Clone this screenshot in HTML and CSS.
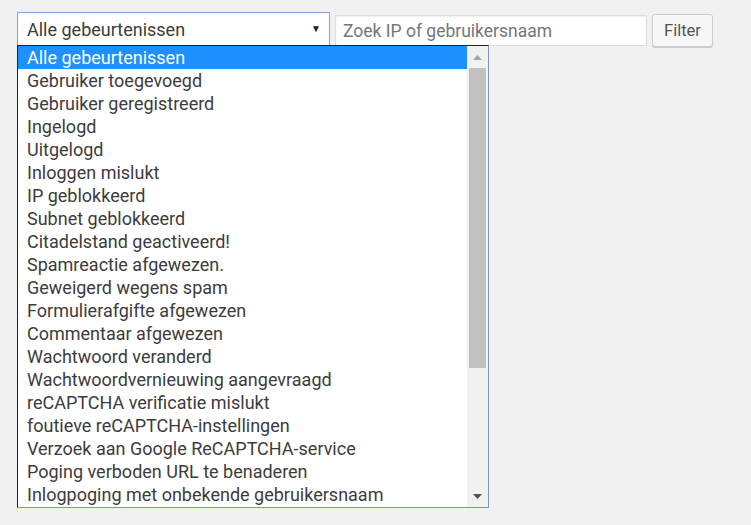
FILE: index.html
```html
<!DOCTYPE html>
<html lang="nl">
<head>
<meta charset="utf-8">
<title>Filter</title>
<link rel="stylesheet" href="styles.css">
</head>
<body>
<div class="page">
  <div class="toolbar">
    <div class="select">
      <span class="select-value">Alle gebeurtenissen</span>
      <span class="select-arrow">▼</span>
    </div>
    <input class="search" type="text" placeholder="Zoek IP of gebruikersnaam">
    <button class="btn" type="button">Filter</button>
  </div>
  <div class="dropdown">
    <ul class="options">
      <li class="option selected">Alle gebeurtenissen</li>
      <li class="option">Gebruiker toegevoegd</li>
      <li class="option">Gebruiker geregistreerd</li>
      <li class="option">Ingelogd</li>
      <li class="option">Uitgelogd</li>
      <li class="option">Inloggen mislukt</li>
      <li class="option">IP geblokkeerd</li>
      <li class="option">Subnet geblokkeerd</li>
      <li class="option">Citadelstand geactiveerd!</li>
      <li class="option">Spamreactie afgewezen.</li>
      <li class="option">Geweigerd wegens spam</li>
      <li class="option">Formulierafgifte afgewezen</li>
      <li class="option">Commentaar afgewezen</li>
      <li class="option">Wachtwoord veranderd</li>
      <li class="option">Wachtwoordvernieuwing aangevraagd</li>
      <li class="option">reCAPTCHA verificatie mislukt</li>
      <li class="option">foutieve reCAPTCHA-instellingen</li>
      <li class="option">Verzoek aan Google ReCAPTCHA-service</li>
      <li class="option">Poging verboden URL te benaderen</li>
      <li class="option">Inlogpoging met onbekende gebruikersnaam</li>
    </ul>
    <div class="scrollbar">
      <div class="sb-btn"><svg width="9" height="5" viewBox="0 0 9 5"><path d="M0 5 L4.5 0 L9 5 Z" fill="#a3a3a3"/></svg></div>
      <div class="sb-track"><div class="sb-thumb"></div></div>
      <div class="sb-btn"><svg width="9" height="5" viewBox="0 0 9 5"><path d="M0 0 L4.5 5 L9 0 Z" fill="#505050"/></svg></div>
    </div>
  </div>
</div>
</body>
</html>
```

FILE: styles.css
```css
html, body {
  margin: 0;
  padding: 0;
  background: #f1f1f1;
  font-family: Roboto, "Noto Sans", sans-serif;
  font-size: 18px;
  color: #3c3c3c;
}

.page {
  display: flex;
  flex-direction: column;
  padding: 12px 0 0 17px;
}

.toolbar {
  display: flex;
  align-items: flex-start;
  height: 33px;
}

.select {
  box-sizing: border-box;
  width: 313px;
  height: 34px;
  flex: none;
  background: #fff;
  border: 1px solid #7fa6d2;
  display: flex;
  align-items: center;
  justify-content: space-between;
  padding: 0 8px 0 9px;
  font-size: 18px;
  color: #3c3c3c;
}

.select-arrow {
  font-size: 10px;
  color: #222;
  margin-top: -1px;
}

.dropdown {
  box-sizing: border-box;
  width: 472px;
  height: 463px;
  flex: none;
  background: #fff;
  border-top: 1px solid #222;
  border-left: 1px solid #222;
  border-right: 1px solid #7a96c2;
  border-bottom: 1px solid #7a96c2;
  display: flex;
}

.options {
  list-style: none;
  margin: 0;
  padding: 0;
  flex: 1;
}

.option {
  height: 23px;
  line-height: 23px;
  padding-left: 9px;
  white-space: nowrap;
  color: #3c3c3c;
}

.option.selected {
  background: #1e90ff;
  color: #fff;
}

.scrollbar {
  width: 21px;
  background: #f1f1f1;
  display: flex;
  flex-direction: column;
}

.sb-btn {
  height: 22px;
  flex: none;
  display: flex;
  align-items: center;
  justify-content: center;
}

.sb-track {
  flex: 1;
  padding: 0 2px;
}

.sb-thumb {
  height: 300px;
  background: #c1c1c1;
}

.search {
  box-sizing: border-box;
  width: 312px;
  height: 31px;
  flex: none;
  margin: 3px 0 0 5px;
  border: 1px solid #ddd;
  background: #fff;
  box-shadow: inset 0 1px 2px rgba(0,0,0,0.07);
  font-family: Roboto, "Noto Sans", sans-serif;
  font-size: 17.5px;
  padding: 0 7px;
  color: #3c3c3c;
  outline: none;
}

.search::placeholder {
  color: #72777c;
}

.btn {
  box-sizing: border-box;
  width: 61px;
  height: 33px;
  flex: none;
  margin: 2px 0 0 5px;
  background: #f7f7f7;
  border: 1px solid #cccccc;
  border-radius: 3px;
  box-shadow: 0 1px 0 #cccccc;
  font-family: Roboto, "Noto Sans", sans-serif;
  font-size: 16.5px;
  color: #555;
  padding: 0;
}
```
